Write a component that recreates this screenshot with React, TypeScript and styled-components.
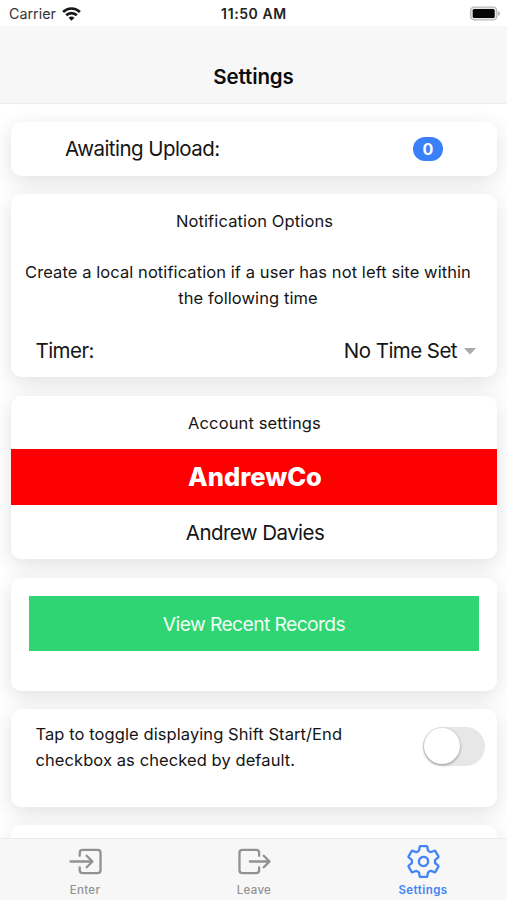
import React from "react";
import styled, { createGlobalStyle } from "styled-components";
import { IoEnterOutline, IoExitOutline, IoSettingsOutline } from "react-icons/io5";

const GlobalStyle = createGlobalStyle`
  *, *::before, *::after { box-sizing: border-box; }
  body { margin: 0; background: #fff; color: #151515; font-family: Inter, "Liberation Sans", sans-serif; }
`;

const Screen = styled.div`
  display: flex;
  flex-direction: column;
  width: 507px;
  height: 900px;
  overflow: hidden;
  background: #fff;
`;

const StatusBar = styled.div`
  display: grid;
  grid-template-columns: 1fr auto 1fr;
  align-items: center;
  flex: none;
  height: 26px;
  padding: 2px 6px 0 9px;
`;

const Carrier = styled.span`
  display: flex;
  align-items: center;
  gap: 6px;
  font-size: 14.3px;
  line-height: 18px;
  color: #333;
`;

const Clock = styled.span`
  font-size: 14px;
  line-height: 18px;
  font-weight: 600;
  letter-spacing: 0.6px;
  margin-right: 2px;
  color: #222;
`;

const Battery = styled.svg`
  justify-self: end;
  display: block;
  margin-top: -2px;
`;

const Header = styled.header`
  flex: none;
  height: 78px;
  padding-top: 38px;
  border-bottom: 1px solid #ececec;
  background: #f7f7f7;
  text-align: center;
`;

const Title = styled.h1`
  margin: 0;
  font-size: 20.5px;
  line-height: 26px;
  font-weight: 600;
  letter-spacing: -0.1px;
  color: #0c0c0c;
`;

const Content = styled.main`
  flex: 1;
  min-height: 0;
  overflow: hidden;
  display: flex;
  flex-direction: column;
  gap: 18.5px;
  padding: 18px 10px 0 11px;
`;

const Card = styled.section<{ $height: number }>`
  flex: none;
  height: ${(p) => p.$height}px;
  border-radius: 10.5px;
  background: #fff;
  box-shadow: 0 5.4px 21.6px rgba(0, 0, 0, 0.12);
`;

const UploadCard = styled(Card)`
  display: flex;
  align-items: center;
  justify-content: space-between;
  padding: 0 54px;
`;

const Label = styled.span`
  font-size: 20.5px;
  line-height: 26px;
  letter-spacing: -0.55px;
`;

const Badge = styled.span`
  width: 30px;
  height: 23.5px;
  border-radius: 12px;
  background: #3a80fb;
  color: #fff;
  font-size: 16px;
  line-height: 24px;
  font-weight: 700;
  text-align: center;
`;

const CardHeading = styled.h2`
  margin: 0;
  padding: 14px 0 0 1px;
  font-size: 16.5px;
  line-height: 26px;
  font-weight: 400;
  letter-spacing: 0.12px;
  text-align: center;
`;

const Description = styled.p`
  margin: 25px 0 0;
  padding: 0 12px 0 0;
  font-size: 16.5px;
  line-height: 26px;
  letter-spacing: 0.08px;
  text-align: center;
`;

const TimerRow = styled.div`
  display: flex;
  align-items: center;
  justify-content: space-between;
  margin-top: 27px;
  padding: 0 21px 0 24.5px;
`;

const SelectValue = styled.div`
  display: flex;
  align-items: center;
  gap: 7px;
`;

const Company = styled.div`
  height: 56px;
  margin-top: 13px;
  padding-left: 2px;
  background: #f00;
  color: #fff;
  font-size: 25.5px;
  line-height: 56px;
  font-weight: 800;
  text-align: center;
`;

const UserName = styled.div`
  padding: 15px 0 0 2px;
  font-size: 20.5px;
  line-height: 26px;
  letter-spacing: -0.55px;
  text-align: center;
`;

const ButtonCard = styled(Card)`
  padding: 18.5px 18px;
`;

const RecordsButton = styled.button`
  display: block;
  width: 100%;
  height: 54.5px;
  padding: 1px 0 0;
  border: 0;
  background: #2fd573;
  color: #effff4;
  font-family: inherit;
  font-size: 19.3px;
  line-height: 54px;
  letter-spacing: -0.6px;
`;

const ToggleCard = styled(Card)`
  display: flex;
  justify-content: space-between;
  padding: 11.5px 12px 0 24.5px;
`;

const ToggleText = styled.p`
  margin: 0;
  font-size: 16.5px;
  line-height: 26px;
  letter-spacing: 0.08px;
`;

const Toggle = styled.div`
  width: 62px;
  height: 39px;
  margin-top: 6.5px;
  padding: 1px;
  border-radius: 20px;
  background: #e7e7e7;
`;

const Knob = styled.div`
  width: 36px;
  height: 36px;
  border-radius: 50%;
  background: #fff;
  box-shadow: 0 1px 3px rgba(0, 0, 0, 0.4);
`;

const TabBar = styled.nav`
  display: grid;
  grid-template-columns: repeat(3, 1fr);
  flex: none;
  height: 62px;
  border-top: 1px solid #ebebeb;
  background: #f7f7f7;
`;

const Tab = styled.div<{ $active?: boolean }>`
  display: flex;
  flex-direction: column;
  align-items: center;
  padding: 3.5px 0 0 1px;
  color: ${(p) => (p.$active ? "#4384f7" : "#929292")};
`;

const TabLabel = styled.span<{ $active?: boolean }>`
  margin-top: 3.5px;
  font-size: 11.5px;
  line-height: 14px;
  font-weight: ${(p) => (p.$active ? 600 : 500)};
  letter-spacing: ${(p) => (p.$active ? 0.45 : 0.3)}px;
`;

export default function App() {
  return (
    <>
      <GlobalStyle />
      <Screen>
        <StatusBar>
          <Carrier>
            Carrier
            <svg width="19" height="15" viewBox="0 0 19 15" fill="none" stroke="#161616" strokeWidth="2.7">
              <path d="M1.1 5C5.8.3 13.2.3 17.9 5" />
              <path d="M4.2 8.3c3-2.9 7.6-2.9 10.6 0" />
              <path d="M6.6 10.7c1.7-1.5 4.1-1.5 5.8 0L9.5 13.7z" fill="#161616" stroke="none" />
            </svg>
          </Carrier>
          <Clock>11:50 AM</Clock>
          <Battery width="32" height="15" viewBox="0 0 32 15">
            <rect x="1.6" y="1.1" width="26.2" height="12.8" rx="3.6" fill="#e8e8e8" stroke="#bbb" strokeWidth="1.4" />
            <rect x="3.7" y="3.1" width="22" height="8.8" rx="1.5" fill="#050505" />
            <path d="M29.2 5.2c2.4 1 2.4 3.6 0 4.6z" fill="#aaa" />
          </Battery>
        </StatusBar>
        <Header>
          <Title>Settings</Title>
        </Header>
        <Content>
          <UploadCard $height={53.5}>
            <Label>Awaiting Upload:</Label>
            <Badge>0</Badge>
          </UploadCard>
          <Card $height={183}>
            <CardHeading>Notification Options</CardHeading>
            <Description>
              Create a local notification if a user has not left site within
              <br />
              the following time
            </Description>
            <TimerRow>
              <Label>Timer:</Label>
              <SelectValue>
                <Label>No Time Set</Label>
                <svg width="12" height="7" viewBox="0 0 12 7">
                  <path d="M0 0h12L6 6.5z" fill="#a9a9a9" />
                </svg>
              </SelectValue>
            </TimerRow>
          </Card>
          <Card $height={163.5}>
            <CardHeading>Account settings</CardHeading>
            <Company>AndrewCo</Company>
            <UserName>Andrew Davies</UserName>
          </Card>
          <ButtonCard $height={113}>
            <RecordsButton>View Recent Records</RecordsButton>
          </ButtonCard>
          <ToggleCard $height={97.5}>
            <ToggleText>
              Tap to toggle displaying Shift Start/End
              <br />
              checkbox as checked by default.
            </ToggleText>
            <Toggle role="switch" aria-checked={false}>
              <Knob />
            </Toggle>
          </ToggleCard>
          <Card $height={80} />
        </Content>
        <TabBar>
          <Tab>
            <IoEnterOutline size={37} />
            <TabLabel>Enter</TabLabel>
          </Tab>
          <Tab>
            <IoExitOutline size={37} />
            <TabLabel>Leave</TabLabel>
          </Tab>
          <Tab $active>
            <IoSettingsOutline size={37} />
            <TabLabel $active>Settings</TabLabel>
          </Tab>
        </TabBar>
      </Screen>
    </>
  );
}
